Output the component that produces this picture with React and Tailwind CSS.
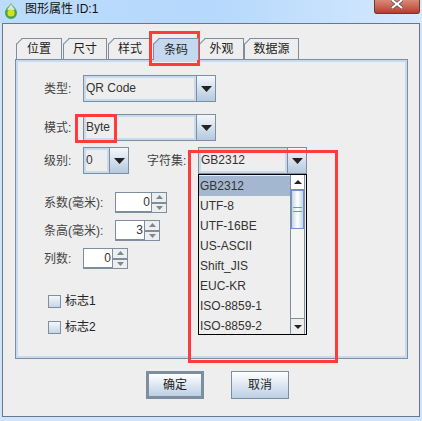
import React from 'react';

const cjk = { fontFamily: '"Liberation Sans", "Noto Sans CJK SC", sans-serif' };

const Arrow = ({ up, small, mid }) => (
  <svg width={small ? 7 : mid ? 8 : 11} height={small ? 4 : mid ? 4 : 6} viewBox="0 0 11 6" className="block" preserveAspectRatio="none">
    <polygon points={up ? '5.5,0 11,6 0,6' : '0,0 11,0 5.5,6'} fill={small ? '#7b8794' : '#222'} />
  </svg>
);

const Combo = ({ text, width }) => (
  <div className="flex h-[27px] border border-[#7d8ea0]" style={{ width }}>
    <div className="flex-1 border-2 border-[#c8daee] bg-[#eeeeee] text-[12px] leading-[21px] text-[#333]">
      {text}
    </div>
    <div className="flex w-[19px] items-center justify-center border-l border-[#7d8ea0] bg-gradient-to-b from-[#f4f7fa] to-[#b5c9de]">
      <Arrow />
    </div>
  </div>
);

const Spinner = ({ value, inputW }) => (
  <div className="flex h-[21px]">
    <div
      className="border-t border-b-2 border-l border-[#7d8ea0] bg-white pr-[1px] text-right text-[12px] leading-[19px] text-[#333]"
      style={{ width: inputW }}
    >
      {value}
    </div>
    <div className="flex w-[16px] flex-col border border-[#7d8ea0] bg-[#eee]">
      <div className="flex flex-1 items-center justify-center border-b-2 border-[#7d8ea0]">
        <Arrow up small />
      </div>
      <div className="flex flex-1 items-center justify-center">
        <Arrow small />
      </div>
    </div>
  </div>
);

const Tab = ({ label, width, active }) => (
  <div
    className={
      active
        ? 'relative z-10 -mb-[1px] flex h-[22px] items-center justify-center border-x border-t border-[#7d8ea0] bg-[#c4d9f0] text-[12px] text-[#222]'
        : 'relative flex h-[21px] items-center justify-center border-x border-t border-[#7d8ea0] bg-[#eeeeee] text-[12px] text-[#222]'
    }
    style={{ width, clipPath: 'polygon(6px 0, 100% 0, 100% 100%, 0 100%, 0 6px)' }}
  >
    <svg width="7" height="7" viewBox="0 0 7 7" className="absolute -left-[1px] -top-[1px]">
      <line x1="0" y1="6" x2="6" y2="0" stroke="#7d8ea0" strokeWidth="2" />
    </svg>
    {label}
  </div>
);

const Check = ({ label }) => (
  <div className="flex items-center gap-[4px]">
    <div className="h-[13px] w-[13px] border border-[#7d8ea0] bg-gradient-to-b from-[#f4f7fa] to-[#c5d6e8]" />
    <span className="text-[12px] leading-[13px] text-[#222]">{label}</span>
  </div>
);

const Btn = ({ label, strong }) => (
  <button
    className={
      (strong ? 'border-[3px] ' : 'border ') +
      'h-[28px] w-[58px] border-[#7d8ea0] bg-gradient-to-b from-white to-[#bccfe4] text-[12px] text-[#222]'
    }
  >
    {label}
  </button>
);

const Label = ({ children, w = 39 }) => (
  <span className="text-[12px] text-[#444]" style={{ width: w }}>
    {children}
  </span>
);

const charsets = ['GB2312', 'UTF-8', 'UTF-16BE', 'US-ASCII', 'Shift_JIS', 'EUC-KR', 'ISO-8859-1', 'ISO-8859-2'];

export default function App() {
  return (
    <div className="relative h-[421px] w-[422px] overflow-hidden bg-[#cfe4fb]" style={cjk}>
      <div className="relative flex h-[23px] gap-[8px] bg-gradient-to-r from-[#bcdcfb] via-[#b5d8fc] to-[#d6e9fd] pl-[5px] pt-[2px]">
        <svg width="12" height="16" viewBox="0 0 12 16" className="mt-[1px]">
          <path d="M6 0 C7 3 12 5 12 10 A6 6 0 0 1 0 10 C0 5 5 3 6 0Z" fill="#4aa34a" />
          <path d="M6 1 C7 3 9 5 10 7 L2 7 C3 5 5 3 6 1Z" fill="#d5e8d5" />
          <circle cx="6" cy="10" r="3.6" fill="#d8e018" />
        </svg>
        <span className="text-[12px] leading-[15px] text-[#111]">图形属性 ID:1</span>
        <div className="absolute right-[2px] top-0 flex h-[14px] w-[46px] justify-center rounded-b-[3px] border border-t-0 border-[#6b3a36] bg-gradient-to-b from-[#d98a78] to-[#b93a2a]">
          <svg width="12" height="9" viewBox="0 0 12 9" className="block">
            <path d="M1 0 L11 8 M11 0 L1 8" stroke="#555" strokeWidth="3.4" />
            <path d="M1 0 L11 8 M11 0 L1 8" stroke="#fff" strokeWidth="2" />
          </svg>
        </div>
      </div>

      <div className="mx-[2px] flex h-[394px] flex-col border border-[#66788a] bg-[#eeeeee] pl-[12px] pr-[12px] pt-[14px]">
        <div className="flex pl-[1px]">
          <Tab label="位置" width={46} />
          <div className="w-px" />
          <Tab label="尺寸" width={44} />
          <div className="w-px" />
          <Tab label="样式" width={44} />
          <div className="w-px" />
          <Tab label="条码" width={46} active />
          <Tab label="外观" width={45} />
          <Tab label="数据源" width={55} />
        </div>

        <div className="relative h-[300px] w-[393px] border border-[#7d8ea0]">
          <div className="h-full border-2 border-[#c8daf0] pl-[26px] pr-[2px] pt-[13px]">
            <div className="flex items-center">
              <Label>类型:</Label>
              <Combo text="QR Code" width={133} />
            </div>
            <div className="mt-[12px] flex items-center">
              <Label>模式:</Label>
              <Combo text="Byte" width={133} />
            </div>
            <div className="mt-[6px] flex items-center">
              <Label>级别:</Label>
              <Combo text="0" width={46} />
              <span className="ml-[18px] w-[51px] text-[12px] text-[#444]">字符集:</span>
              <Combo text="GB2312" width={109} />
            </div>
            <div className="mt-[18px] flex flex-col gap-[7px]">
              <div className="flex items-center">
                <Label w={71}>系数(毫米):</Label>
                <Spinner value="0" inputW={36} />
              </div>
              <div className="flex items-center">
                <Label w={71}>条高(毫米):</Label>
                <Spinner value="3" inputW={29} />
              </div>
              <div className="flex items-center">
                <Label>列数:</Label>
                <Spinner value="0" inputW={29} />
              </div>
            </div>
            <div className="ml-[4px] mt-[26px] flex flex-col gap-[13px]">
              <Check label="标志1" />
              <Check label="标志2" />
            </div>
          </div>

          {/* open dropdown sits over the panel */}
          <div className="absolute left-[182px] top-[114px] flex h-[161px] w-[109px] border border-black bg-[#eeeeee] pr-px">
            <div className="flex-1 pt-[1px]">
              {charsets.map((c, i) => (
                <div
                  key={c}
                  className={(i === 0 ? 'bg-[#a3b8d0] ' : '') + 'h-[20px] pl-[1px] text-[12px] leading-[20px] text-[#333]'}
                >
                  {c}
                </div>
              ))}
            </div>
            <div className="flex w-[15px] flex-col border-x border-[#7d8ea0]">
              <div className="flex h-[15px] items-center justify-center border-b border-[#7d8ea0] bg-white">
                <Arrow up mid />
              </div>
              <div className="flex h-[39px] items-center justify-center border border-[#7092cc] bg-gradient-to-r from-[#c4d6ea] via-white to-[#c4d6ea]">
                <div className="h-[5px] w-[9px] border-y border-[#7092cc]" />
              </div>
              <div className="flex-1 bg-[#f4f4f4]" />
              <div className="flex h-[16px] items-center justify-center border-t border-[#7d8ea0] bg-[#eeeeee]">
                <Arrow mid />
              </div>
            </div>
          </div>
        </div>

        <div className="mt-[12px] flex gap-[27px] pl-[131px]">
          <Btn label="确定" strong />
          <Btn label="取消" />
        </div>
      </div>

      {/* red annotations drawn over the shot */}
      <div className="absolute left-[149px] top-[31px] h-[35px] w-[51px] border-[3px] border-[#ff3b3b]" />
      <div className="absolute left-[75px] top-[114px] h-[29px] w-[42px] border-[3px] border-[#ff3b3b]" />
      <div className="absolute left-[188px] top-[150px] h-[213px] w-[150px] border-[3px] border-[#ff3b3b]" />
    </div>
  );
}
